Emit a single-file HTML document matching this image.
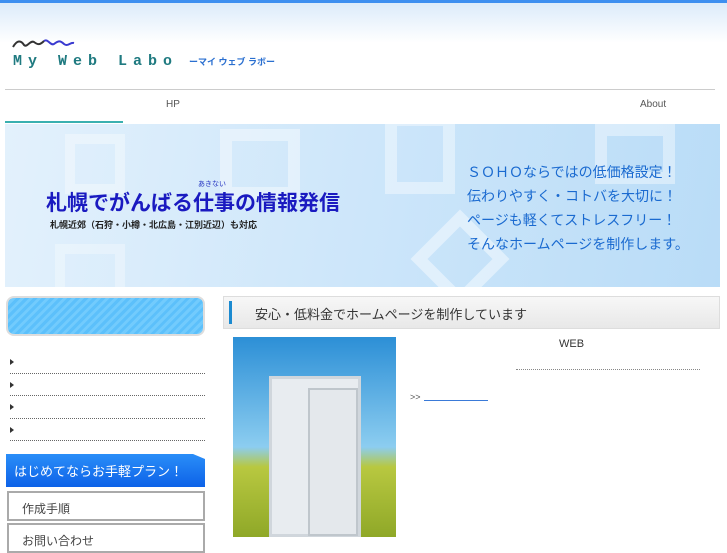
<!DOCTYPE html>
<html><head><meta charset="utf-8"><style>
*{margin:0;padding:0;box-sizing:border-box}
body{width:727px;height:545px;overflow:hidden;background:#fff;font-family:"Liberation Sans","Noto Sans CJK JP",sans-serif;position:relative}
.a{position:absolute}
</style></head><body>
<div class="a" style="left:0;top:0;width:727px;height:3px;background:#3d8ff0"></div>
<div class="a" style="left:0;top:3px;width:727px;height:40px;background:linear-gradient(#dcebfa,#fff)"></div>
<svg class="a" style="left:12px;top:36px" width="64" height="14"><path d="M1 11 C5 4 9 4 12 9 C15 12 18 4 22 6 C26 9 28 9 32 5" stroke="#333" stroke-width="2" fill="none"/><path d="M32 5 C36 2 38 10 42 8 C46 5 48 4 52 8 C56 11 58 6 62 7" stroke="#3a3ad0" stroke-width="2" fill="none"/></svg>
<div class="a" style="left:13px;top:53px;font-family:'Liberation Mono',monospace;font-size:15px;color:#1f7a80;letter-spacing:6px;font-weight:bold;white-space:nowrap">My Web Labo</div>
<div class="a" style="left:189px;top:55px;font-size:9px;color:#2a6fd0;font-weight:bold;white-space:nowrap">ーマイ ウェブ ラボー</div>
<div class="a" style="left:5px;top:89px;width:710px;height:1px;background:#ccc"></div>
<div class="a" style="left:166px;top:99px;font-size:10px;color:#555">HP</div>
<div class="a" style="left:640px;top:99px;font-size:10px;color:#555">About</div>
<div class="a" style="left:5px;top:121px;width:118px;height:2px;background:#3ab0b0"></div>
<div class="a" style="left:5px;top:124px;width:715px;height:163px;background:linear-gradient(100deg,#e3f1fc,#cde6fa 50%,#b9dcf7);overflow:hidden">
<div class="a" style="left:60px;top:10px;width:60px;height:60px;border:10px solid rgba(255,255,255,.35)"></div>
<div class="a" style="left:215px;top:5px;width:80px;height:70px;border:12px solid rgba(255,255,255,.4)"></div>
<div class="a" style="left:380px;top:-10px;width:70px;height:80px;border:12px solid rgba(255,255,255,.4)"></div>
<div class="a" style="left:590px;top:0;width:80px;height:60px;border:12px solid rgba(255,255,255,.4)"></div>
<div class="a" style="left:420px;top:100px;width:70px;height:70px;border:12px solid rgba(255,255,255,.45);transform:rotate(45deg)"></div>
<div class="a" style="left:50px;top:120px;width:70px;height:60px;border:10px solid rgba(255,255,255,.3)"></div>
</div>
<div class="a" style="left:198px;top:179px;font-size:7px;color:#2030c0">あきない</div>
<div class="a" style="left:46px;top:187px;font-size:21px;font-weight:bold;color:#1a1ac0;white-space:nowrap">札幌でがんばる仕事の情報発信</div>
<div class="a" style="left:50px;top:218px;font-size:9px;font-weight:bold;color:#222;white-space:nowrap">札幌近郊（石狩・小樽・北広島・江別近辺）も対応</div>
<div class="a" style="left:467px;top:160px;font-size:14px;color:#1a6ad0;line-height:24px;white-space:nowrap">ＳＯＨＯならではの低価格設定！<br>伝わりやすく・コトバを大切に！<br>ページも軽くてストレスフリー！<br>そんなホームページを制作します。</div>
<div class="a" style="left:6px;top:296px;width:199px;height:40px;border:2px solid #ddd;border-radius:8px;background:repeating-linear-gradient(135deg,#5cc0fb 0 3px,#72cbfd 3px 6px)"></div>
<div class="a" style="left:10px;top:351px;width:195px;height:95px">
<div style="height:22.5px;border-bottom:1px dotted #666;position:relative"><span class="a" style="left:0;top:8px;border-left:4px solid #333;border-top:3px solid transparent;border-bottom:3px solid transparent"></span></div>
<div style="height:22.5px;border-bottom:1px dotted #666;position:relative"><span class="a" style="left:0;top:8px;border-left:4px solid #333;border-top:3px solid transparent;border-bottom:3px solid transparent"></span></div>
<div style="height:22.5px;border-bottom:1px dotted #666;position:relative"><span class="a" style="left:0;top:8px;border-left:4px solid #333;border-top:3px solid transparent;border-bottom:3px solid transparent"></span></div>
<div style="height:22.5px;border-bottom:1px dotted #666;position:relative"><span class="a" style="left:0;top:8px;border-left:4px solid #333;border-top:3px solid transparent;border-bottom:3px solid transparent"></span></div>
</div>
<div class="a" style="left:6px;top:454px;width:199px;height:33px;background:linear-gradient(#2a8ef8,#0d62e8);clip-path:polygon(0 0,94% 0,100% 15%,100% 100%,0 100%);color:#fff;font-size:13px;padding:7px 0 0 8px;white-space:nowrap">はじめてならお手軽プラン！</div>
<div class="a" style="left:7px;top:491px;width:198px;height:30px;border:2px solid #aaa;font-size:12px;color:#444;padding:7px 0 0 13px">作成手順</div>
<div class="a" style="left:7px;top:523px;width:198px;height:30px;border:2px solid #aaa;font-size:12px;color:#444;padding:7px 0 0 13px">お問い合わせ</div>
<div class="a" style="left:223px;top:296px;width:497px;height:33px;border:1px solid #ddd;background:linear-gradient(#f7f7f7,#e8e8e8)"></div>
<div class="a" style="left:229px;top:301px;width:3px;height:23px;background:#1b8ad0"></div>
<div class="a" style="left:255px;top:304px;font-size:13px;color:#333;white-space:nowrap">安心・低料金でホームページを制作しています</div>
<div class="a" style="left:233px;top:337px;width:163px;height:200px;background:linear-gradient(#2c8fd6,#8ccdf0 55%,#b8c840 65%,#8fa828)"></div>
<div class="a" style="left:269px;top:376px;width:92px;height:161px;background:#e8ecf0;border:3px solid #d0d6dc"></div>
<div class="a" style="left:308px;top:388px;width:50px;height:148px;background:#e4e8ec;border:2px solid #bfc6cc"></div>
<div class="a" style="left:559px;top:338px;font-size:11px;color:#333">WEB</div>
<div class="a" style="left:516px;top:369px;width:184px;border-top:1px dotted #888"></div>
<div class="a" style="left:410px;top:392px;font-size:9px;color:#555">&gt;&gt;</div>
<div class="a" style="left:424px;top:400px;width:64px;height:1px;background:#3a7ad8"></div>
</body></html>
